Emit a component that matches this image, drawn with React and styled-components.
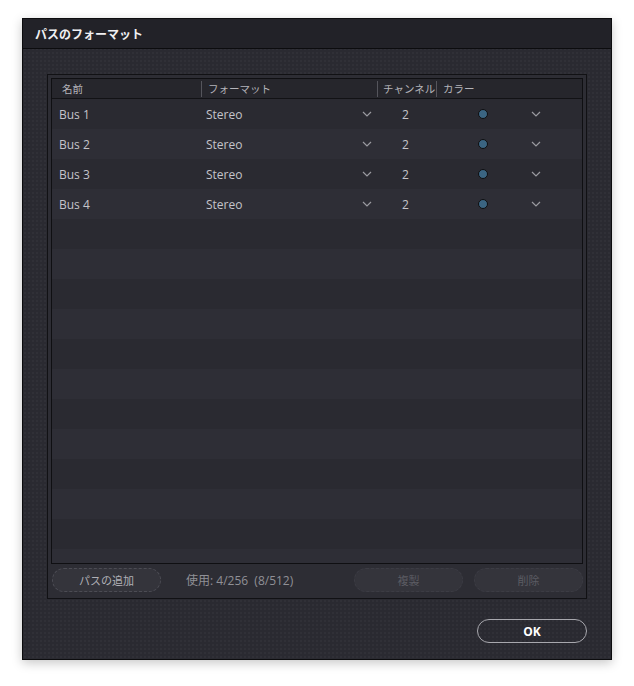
import React from "react";
import styled, { createGlobalStyle } from "styled-components";

const Global = createGlobalStyle`
  html, body { margin: 0; padding: 0; background: #ffffff; }
  body { font-family: "Open Sans", "Noto Sans CJK JP", sans-serif; }
`;

const Page = styled.div`
  width: 634px;
  height: 686px;
  padding: 18px 0 0 22px;
  box-sizing: border-box;
`;

const Dialog = styled.div`
  width: 590px;
  height: 642px;
  box-sizing: border-box;
  border: 1px solid #0c0c0e;
  background-color: #2a2a31;
  background-image: radial-gradient(rgba(255,255,255,0.045) 0.6px, transparent 0.9px);
  background-size: 4px 4px;
  box-shadow: 0 3px 10px rgba(0,0,0,0.22);
  display: flex;
  flex-direction: column;
`;

const TitleBar = styled.div`
  height: 30px;
  box-sizing: border-box;
  background: #222228;
  border-bottom: 1px solid #0c0c0e;
  color: #f0f0f2;
  font-size: 12px;
  font-weight: 700;
  display: flex;
  align-items: center;
  padding-left: 12px;
`;

const Body = styled.div`
  flex: 1;
  padding: 25px 24px 16px 24px;
  display: flex;
  flex-direction: column;
`;

const Group = styled.div`
  height: 525px;
  box-sizing: border-box;
  border: 1px solid #111114;
  background: #2d2d34;
  padding: 3px 3px 6px 3px;
  display: flex;
  flex-direction: column;
`;

const Table = styled.div`
  height: 486px;
  box-sizing: border-box;
  border: 1px solid #0f0f12;
  background: #2b2b32;
  overflow: hidden;
`;

const columns = "149px 176px 59px 1fr";

const Header = styled.div`
  height: 20px;
  box-sizing: border-box;
  background: #26262c;
  border-bottom: 1px solid #121215;
  display: grid;
  grid-template-columns: ${columns};
  align-items: center;
  color: #b4b4ba;
  font-size: 10.5px;
`;

const HeadCell = styled.div`
  height: 16px;
  line-height: 16px;
  padding-left: ${p => p.$pad || 6}px;
  border-left: ${p => (p.$first ? "none" : "1px solid #55555c")};
  white-space: nowrap;
  overflow: hidden;
`;

const Row = styled.div`
  height: 30px;
  display: grid;
  grid-template-columns: ${columns};
  align-items: center;
  background: ${p => (p.$alt ? "#2e2e36" : "#2a2a31")};
  color: #c4c4ca;
  font-size: 12px;
`;

const Cell = styled.div`
  display: flex;
  align-items: center;
  justify-content: ${p => p.$justify || "flex-start"};
  padding-left: ${p => p.$pad || 0}px;
  padding-right: ${p => p.$padR || 0}px;
  height: 100%;
`;

const Chevron = styled.svg`
  width: 10px;
  height: 6px;
  flex: none;
`;

const Dot = styled.span`
  width: 10px;
  height: 10px;
  border-radius: 50%;
  background: #3b6582;
  border: 1px solid #0e0e10;
  box-sizing: border-box;
  flex: none;
`;

const Footer = styled.div`
  display: flex;
  align-items: center;
  margin-top: 4px;
  padding-left: 1px;
`;

const PillButton = styled.button`
  width: 109px;
  height: 24px;
  border-radius: 12px;
  border: 1px dashed ${p => (p.$disabled ? "#3c3c44" : "#4c4c54")};
  background: #34343b;
  color: ${p => (p.$disabled ? "#5c5c63" : "#b0b0b6")};
  font-family: "Noto Sans CJK JP", sans-serif;
  font-size: 11px;
  padding: 0;
  margin-left: ${p => p.$ml || 0}px;
  cursor: default;
`;

const Usage = styled.span`
  color: #909096;
  font-size: 12px;
  margin-left: 25px;
  white-space: pre;
  flex: 1;
`;

const Actions = styled.div`
  display: flex;
  justify-content: flex-end;
  margin-top: 20px;
`;

const OkButton = styled.button`
  width: 110px;
  height: 24px;
  border-radius: 12px;
  border: 1px solid #a8a8ae;
  background: transparent;
  color: #ffffff;
  font-family: "Open Sans", sans-serif;
  font-weight: 700;
  font-size: 12px;
  padding: 0;
`;

const ChevronIcon = () => (
  <Chevron viewBox="0 0 10 6">
    <path d="M1 1 L5 5 L9 1" fill="none" stroke="#9a9aa0" strokeWidth="1.2" />
  </Chevron>
);

const buses = ["Bus 1", "Bus 2", "Bus 3", "Bus 4"];

export default function App() {
  const rows = Array.from({ length: 16 }, (_, i) => i);
  return (
    <Page>
      <Global />
      <Dialog>
        <TitleBar>パスのフォーマット</TitleBar>
        <Body>
          <Group>
            <Table>
              <Header>
                <HeadCell $first $pad={10}>名前</HeadCell>
                <HeadCell>フォーマット</HeadCell>
                <HeadCell $pad={5}>チャンネル</HeadCell>
                <HeadCell $pad={6}>カラー</HeadCell>
              </Header>
              {rows.map(i => {
                const bus = buses[i];
                return (
                  <Row key={i} $alt={i % 2 === 1}>
                    {bus ? (
                      <>
                        <Cell $pad={7}>{bus}</Cell>
                        <Cell $pad={5} $padR={5} $justify="space-between">
                          Stereo
                          <ChevronIcon />
                        </Cell>
                        <Cell $pad={25}>2</Cell>
                        <Cell $pad={42} $padR={41} $justify="space-between">
                          <Dot />
                          <ChevronIcon />
                        </Cell>
                      </>
                    ) : null}
                  </Row>
                );
              })}
            </Table>
            <Footer>
              <PillButton>パスの追加</PillButton>
              <Usage>使用: 4/256  (8/512)</Usage>
              <PillButton $disabled>複製</PillButton>
              <PillButton $disabled $ml={11}>削除</PillButton>
            </Footer>
          </Group>
          <Actions>
            <OkButton>OK</OkButton>
          </Actions>
        </Body>
      </Dialog>
    </Page>
  );
}
